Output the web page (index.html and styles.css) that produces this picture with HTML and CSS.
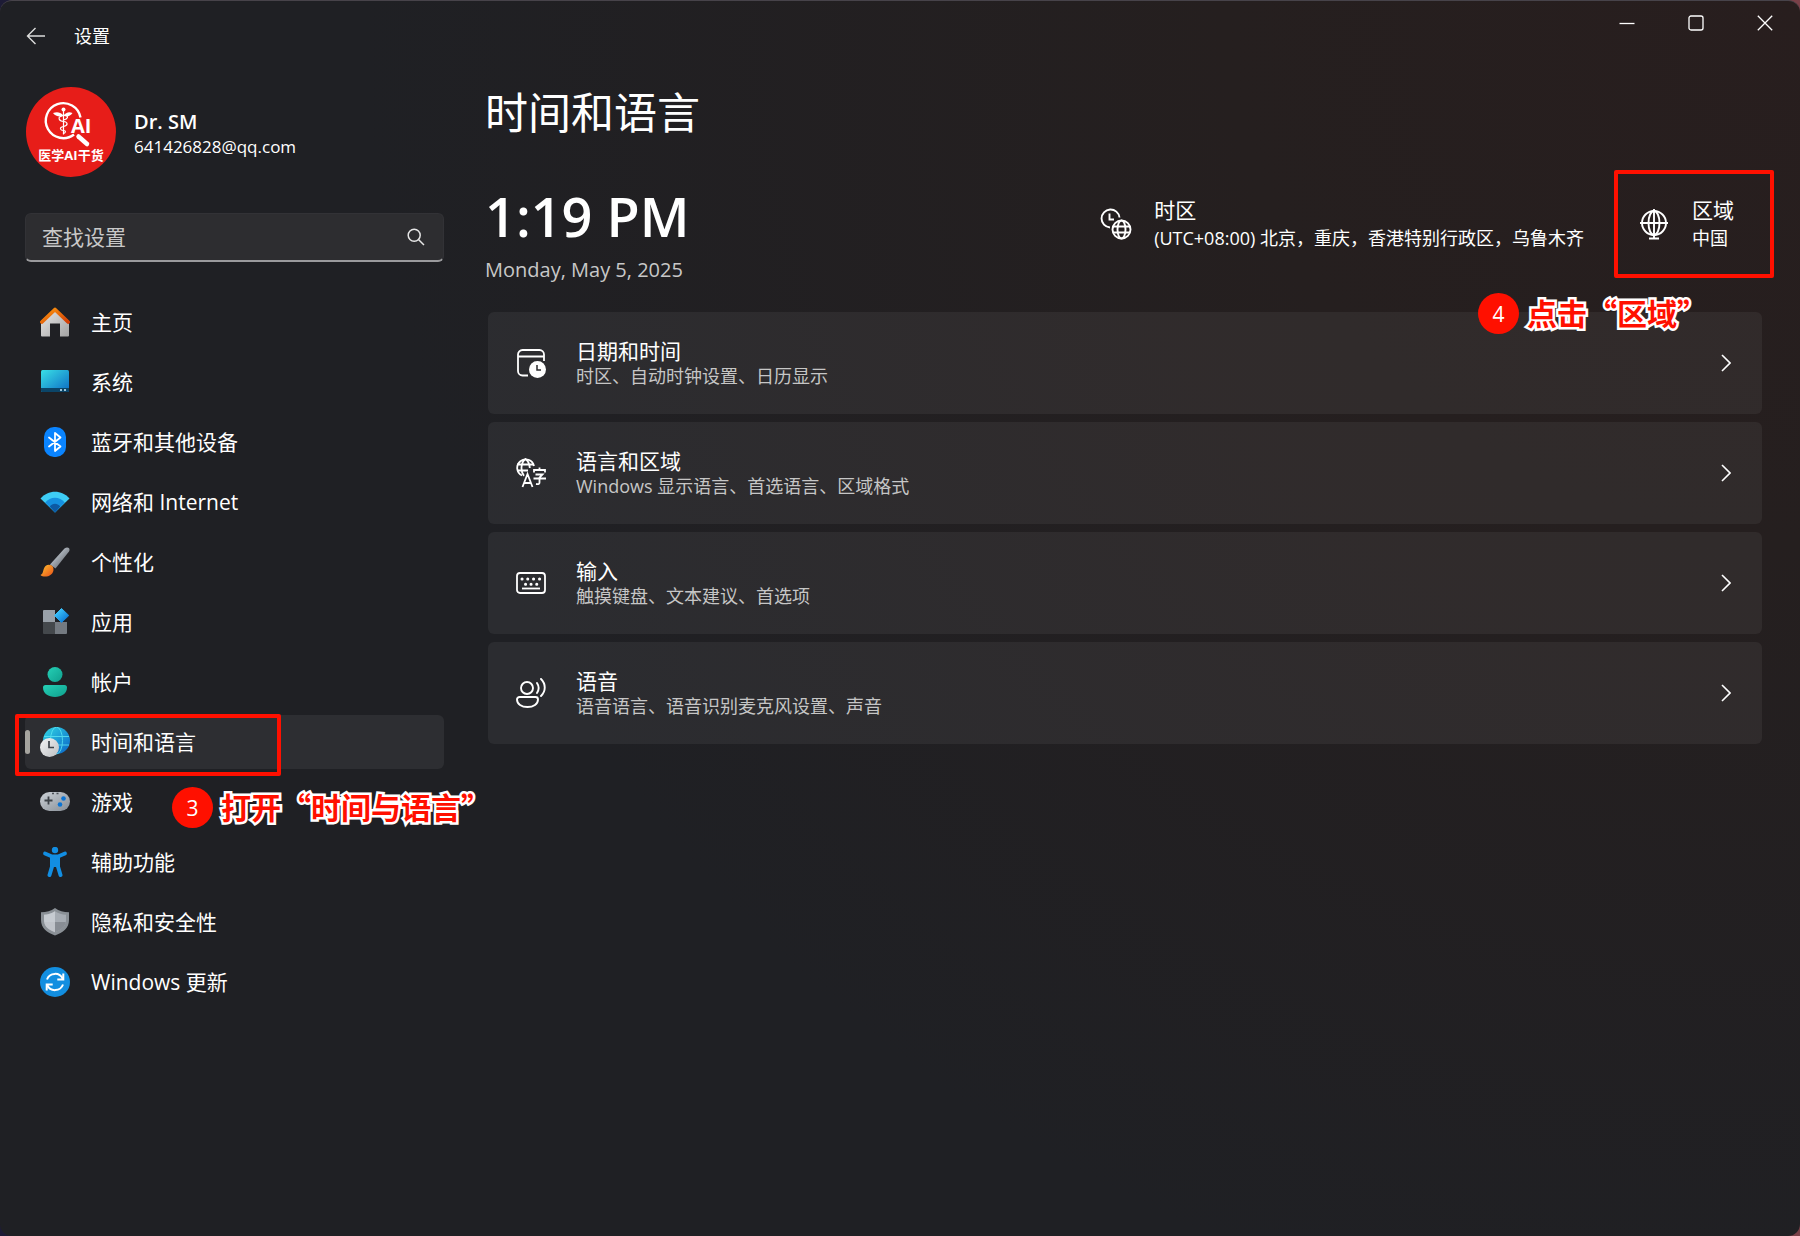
FILE: index.html
```html
<!DOCTYPE html>
<html lang="zh-CN">
<head>
<meta charset="utf-8">
<meta name="viewport" content="width=device-width, initial-scale=1">
<title>设置</title>
<link rel="stylesheet" href="styles.css">
</head>
<body>
<div class="window">
  <header class="titlebar">
    <button class="back" type="button" aria-label="返回">
      <svg width="20" height="18" viewBox="0 0 20 18" fill="none" stroke="#dcdcdc" stroke-width="1.4"><path d="M9.5 1 1.5 9l8 8M1.5 9H19"/></svg>
    </button>
    <span class="app-name">设置</span>
    <div class="controls">
      <button type="button" aria-label="最小化"><svg width="16" height="16" viewBox="0 0 16 16" fill="none" stroke="#fff" stroke-width="1.3"><path d="M.5 8.5h15"/></svg></button>
      <button type="button" aria-label="最大化"><svg width="16" height="16" viewBox="0 0 16 16" fill="none" stroke="#fff" stroke-width="1.3"><rect x="1" y="1" width="14" height="14" rx="2"/></svg></button>
      <button type="button" aria-label="关闭"><svg width="16" height="16" viewBox="0 0 16 16" fill="none" stroke="#fff" stroke-width="1.3"><path d="m.8.8 14.4 14.4M15.2.8.8 15.2"/></svg></button>
    </div>
  </header>

  <div class="layout">
    <aside class="sidebar">
      <div class="account">
        <svg class="avatar" viewBox="0 0 90 90" role="img" aria-label="医学AI干货">
          <circle cx="45" cy="45" r="45" fill="#e71d19"/>
          <path d="M54.500 30.500A17.500 17.500 0 1 0 48 47.500" fill="none" stroke="#fff" stroke-width="2.400"/>
          <path d="m52.500 49.500 8.500 7.500" stroke="#fff" stroke-width="4.500" stroke-linecap="round"/>
          <g fill="none" stroke="#fff" stroke-width="1.200" stroke-linecap="round">
            <path d="M37.500 23v24"/>
            <path d="M36 29c-5 1-3 5 1.500 5.500s5 4 0 5-3 4 0 4 2 2.500 0 3"/>
            <path d="M39 28c4 1 3 4-1.500 5"/>
          </g>
          <circle cx="37.500" cy="22.500" r="2" fill="#fff"/>
          <path d="M37 28c-3-3-6-3.500-10-2 2 3 6 4 10 3zM38 28c3-3 5-3.500 8.500-2-2 3-5 4-8.500 3z" fill="#fff"/>
          <text x="45" y="46" font-size="20" font-weight="700" fill="#fff">AI</text>
          <text x="45" y="73" font-size="13" font-weight="700" fill="#fff" text-anchor="middle">医学AI干货</text>
        </svg>
        <div class="account-text">
          <strong>Dr. SM</strong>
          <span>641426828@qq.com</span>
        </div>
      </div>

      <form class="search" role="search">
        <input type="search" placeholder="查找设置" aria-label="查找设置">
        <button type="submit" aria-label="搜索"><svg width="18" height="18" viewBox="0 0 18 18" fill="none" stroke="#e6e6e6" stroke-width="1.500"><circle cx="7.200" cy="7.200" r="6"/><path d="m11.500 11.500 5.500 5.500"/></svg></button>
      </form>

      <nav class="nav">
        <a href="#home"><svg viewBox="0 0 30 30"><defs><linearGradient id="wall" x1="0" y1="0" x2="1" y2="1"><stop offset="0" stop-color="#e9e9e9"/><stop offset="1" stop-color="#a3a3a3"/></linearGradient><linearGradient id="roof" x1="0" y1="0" x2="1" y2="1"><stop offset="0" stop-color="#ff9b10"/><stop offset="1" stop-color="#d13c05"/></linearGradient></defs><path d="M1 14 15 2l14 12v14.500a1 1 0 0 1-1 1h-8V16.500H10v13H2a1 1 0 0 1-1-1z" fill="url(#wall)"/><path d="M1.900 15 15 2.500 28.100 15" fill="none" stroke="url(#roof)" stroke-width="3.800" stroke-linecap="round" stroke-linejoin="round"/></svg><span>主页</span></a>
        <a href="#system"><svg viewBox="0 0 30 30"><defs><linearGradient id="scr" x1="0" y1="0" x2="1" y2="1"><stop offset="0" stop-color="#39e0e6"/><stop offset="1" stop-color="#0c6ac4"/></linearGradient></defs><rect x="1" y="3" width="28" height="22" rx="1.500" fill="url(#scr)"/><path d="M1 21h28v2.500a1.500 1.500 0 0 1-1.500 1.500h-25A1.500 1.500 0 0 1 1 23.500z" fill="#0b4568"/><path d="M20 22h2v2h-2zM24 22h2v2h-2z" fill="#9cc4da"/></svg><span>系统</span></a>
        <a href="#bluetooth"><svg viewBox="0 0 30 30"><rect x="4" y="0" width="22" height="30" rx="10" fill="#0a84ff"/><path d="m9 10.500 11.500 9L15 24V6l5.500 4.500-11.500 9" fill="none" stroke="#fff" stroke-width="1.800" stroke-linejoin="round" stroke-linecap="round"/></svg><span>蓝牙和其他设备</span></a>
        <a href="#network"><svg viewBox="0 0 30 30"><path d="M.5 11.500C8 2.500 22 2.500 29.500 11.500L15 25.500z" fill="#3ecdf5"/><path d="M5.200 15.500c5-6.500 14.600-6.500 19.600 0L15 25.500z" fill="#1590e0"/><path d="M9.800 19.500c2.800-3.800 7.600-3.800 10.400 0L15 25.500z" fill="#0c59a4"/></svg><span>网络和 Internet</span></a>
        <a href="#personalization"><svg viewBox="0 0 30 30"><defs><linearGradient id="hnd" x1="0" y1="0" x2="1" y2="1"><stop offset="0.300" stop-color="#b9c0c8"/><stop offset="0.800" stop-color="#686d74"/></linearGradient><linearGradient id="tip" x1="0" y1="0" x2="1" y2="1"><stop offset="0" stop-color="#ffc12e"/><stop offset="1" stop-color="#e8501a"/></linearGradient></defs><path d="M10 17.500 24.500 1.500c3-2.500 6.300-.5 4.500 3L15.500 21.500z" fill="url(#hnd)"/><path d="M.5 28c3.500-1.500 2-6 5-9 2.500-2 6-1.500 7.500 1 2 5-2 9-6.500 9.500-2 .2-5 0-6-1.500z" fill="url(#tip)"/></svg><span>个性化</span></a>
        <a href="#apps"><svg viewBox="0 0 30 30"><defs><linearGradient id="dia" x1="0" y1="0" x2="1" y2="1"><stop offset="0.200" stop-color="#3cc4fa"/><stop offset="0.900" stop-color="#0870d0"/></linearGradient></defs><path d="M4 3h11v12H3V4a1 1 0 0 1 1-1z" fill="#98a0a8"/><path d="M3 15h12v12H4a1 1 0 0 1-1-1z" fill="#44484c"/><path d="M15 15h12v11a1 1 0 0 1-1 1H15z" fill="#747a81"/><path d="M21.500 1.500 28.800 8.500 21.500 15.500 14.500 8.500z" fill="url(#dia)" stroke="url(#dia)" stroke-linejoin="round"/></svg><span>应用</span></a>
        <a href="#accounts"><svg viewBox="0 0 30 30"><defs><linearGradient id="usr" x1="0" y1="0" x2="1" y2="1"><stop offset="0" stop-color="#25d0b6"/><stop offset="1" stop-color="#0f9f8d"/></linearGradient></defs><circle cx="15" cy="7.500" r="7.500" fill="url(#usr)"/><path d="M5.500 18h19a2.500 2.500 0 0 1 2.500 2.500c0 6-5.500 9.500-12 9.500S3 26.500 3 20.500A2.500 2.500 0 0 1 5.500 18z" fill="url(#usr)"/></svg><span>帐户</span></a>
        <a href="#time" class="active" aria-current="page"><svg viewBox="0 0 30 30"><defs><linearGradient id="glb" x1="0" y1="0" x2="1" y2="1"><stop offset="0" stop-color="#30d8e4"/><stop offset="1" stop-color="#0a62c8"/></linearGradient><linearGradient id="clk" x1="0" y1="0" x2="1" y2="1"><stop offset="0" stop-color="#f4f4f4"/><stop offset="1" stop-color="#bcbfc2"/></linearGradient></defs><circle cx="16.500" cy="13.500" r="13.500" fill="url(#glb)"/><g fill="none" stroke="#5ee6f4" stroke-width="1" opacity=".8"><ellipse cx="16.500" cy="13.500" rx="6" ry="13.500"/><path d="M4 9.500h25M4 18h25"/></g><circle cx="9.500" cy="20.500" r="9.500" fill="url(#clk)"/><path d="M9 14v6.500h5" fill="none" stroke="#3c4248" stroke-width="1.700"/></svg><span>时间和语言</span><i class="mark mark-nav"></i></a>
        <a href="#gaming"><svg viewBox="0 0 30 30"><defs><linearGradient id="pad" x1="0" y1="0" x2="1" y2="1"><stop offset="0" stop-color="#ccd1d7"/><stop offset="1" stop-color="#868d95"/></linearGradient></defs><rect x="0" y="5" width="30" height="19" rx="9.500" fill="url(#pad)"/><path d="M8.500 9.500v8M4.500 13.500h8" stroke="#3d4248" stroke-width="1.800"/><path d="M12 6.500h2M16.500 6.500h2" stroke="#4c5157" stroke-width="1.300"/><circle cx="23.500" cy="11.500" r="2.300" fill="#0b74d4"/><circle cx="20" cy="17.500" r="2.300" fill="#0b74d4"/></svg><span>游戏</span></a>
        <a href="#accessibility"><svg viewBox="0 0 30 30"><g fill="none" stroke="#128ee2" stroke-linecap="round" stroke-linejoin="round"><path d="m5 6.500 7 3h6l7-3" stroke-width="3.800"/><path d="m12.500 18-3 10M17.500 18l3 10" stroke-width="4"/></g><path d="M10 8.500h10V20H10z" fill="#128ee2"/><circle cx="15" cy="3" r="3.200" fill="#128ee2"/></svg><span>辅助功能</span></a>
        <a href="#privacy"><svg viewBox="0 0 30 30"><path d="M15 1c4 3 8.500 4 14 4.200V13c0 8-6 12.500-14 15.500C7 25.500 1 21 1 13V5.200C6.500 5 11 4 15 1z" fill="#8a9096"/><path d="M15 4.200c3.500 2.300 7 3.300 11 3.600V13c0 6.500-4.500 9.500-11 12.300C8.500 22.500 4 19.500 4 13V7.800c4-.3 7.500-1.300 11-3.600z" fill="#a6acb3"/><path d="M15 4.200V15H4.200L4 13V7.800c4-.3 7.500-1.300 11-3.600z" fill="#c6cbd1"/><path d="M15 15v10.300C8.800 22.600 4.700 20 4.200 15z" fill="#c0c4ca"/><path d="M15 15h10.800c-.6 5-4.700 7.600-10.800 10.300z" fill="#888d94"/></svg><span>隐私和安全性</span></a>
        <a href="#update"><svg viewBox="0 0 30 30"><circle cx="15" cy="15" r="15" fill="#128ee0"/><g fill="none" stroke="#fff" stroke-width="2"><path d="M7 12.500A8.500 8.500 0 0 1 22.800 12M23 17.500A8.500 8.500 0 0 1 7.200 18"/><path d="M23.300 6.500V12.500h-6M6.700 23.500V17.500h6"/></g></svg><span>Windows 更新</span></a>
      </nav>
      <p class="note note-nav"><b>3</b><span>打开“时间与语言”</span></p>
    </aside>

    <main class="content">
      <h1>时间和语言</h1>
      <section class="summary">
        <div class="clock">
          <time class="clock-time">1:19 PM</time>
          <span class="clock-date">Monday, May 5, 2025</span>
        </div>
        <button class="fact" type="button">
          <svg viewBox="0 0 32 32" fill="none" stroke="#fff" stroke-width="1.900"><path d="M10 19.500A9 9 0 1 1 19.500 9.500"/><path d="M9.500 5.500v6H14"/><circle cx="21.500" cy="21.500" r="9"/><ellipse cx="21.500" cy="21.500" rx="4" ry="9"/><path d="M13 18.500h17M13 24.500h17"/></svg>
          <span class="fact-text"><span>时区</span><small>(UTC+08:00) 北京，重庆，香港特别行政区，乌鲁木齐</small></span>
        </button>
        <button class="fact fact-region" type="button">
          <svg viewBox="0 0 32 32" fill="none" stroke="#fff" stroke-width="1.900"><circle cx="16" cy="15" r="12"/><ellipse cx="16" cy="15" rx="5.500" ry="12"/><path d="M2 15h28M16 1v29M11 30.500h10"/></svg>
          <span class="fact-text"><span>区域</span><small>中国</small></span>
          <i class="mark mark-region"></i>
        </button>
        <p class="note note-region"><b>4</b><span>点击“区域”</span></p>
      </section>

      <div class="cards">
        <a class="card" href="#datetime">
          <svg class="card-icon" viewBox="0 0 30 30" fill="none" stroke="#fff" stroke-width="1.800"><path d="M12 27.500H6.500A4.500 4.500 0 0 1 2 23V6.500A4.500 4.500 0 0 1 6.500 2h17A4.500 4.500 0 0 1 28 6.500V13M2 8.500h26"/><circle cx="21.500" cy="21.500" r="8.500" fill="#fff" stroke="none"/><path d="M21 17v5h4" stroke="#2b2b2e" stroke-width="1.500"/></svg>
          <span class="card-text"><span>日期和时间</span><small>时区、自动时钟设置、日历显示</small></span>
          <svg class="chevron" viewBox="0 0 10 18"><path d="m1 1 8 8-8 8"/></svg>
        </a>
        <a class="card" href="#language">
          <svg class="card-icon" viewBox="0 0 30 30" fill="none" stroke="#fff" stroke-width="1.800"><path d="M6 17.500A8.500 8.500 0 1 1 18 8"/><path d="M8 17.800C4 13 5 4 9.500 1c3 2 4 5 4.300 9M1 6.500h16.500M1 12.500h11"/><path d="m6.500 29 5-13 5 13M8 25h7M18 14.500v-2.500h11v2.500M23.500 9.500V12M19.500 16.500h7l-3 3v5c0 1.500-1 2-3.500 1.500M17.500 20.500H30"/></svg>
          <span class="card-text"><span>语言和区域</span><small>Windows 显示语言、首选语言、区域格式</small></span>
          <svg class="chevron" viewBox="0 0 10 18"><path d="m1 1 8 8-8 8"/></svg>
        </a>
        <a class="card" href="#typing">
          <svg class="card-icon" viewBox="0 0 30 30" fill="none" stroke="#fff" stroke-width="1.800"><rect x="1" y="5" width="28" height="20" rx="3"/><path d="M6 20.500h18"/><path d="M6 11h.1M11.700 11h.1M17.500 11h.1M23.500 11h.1M9.500 16.300h.1M15 16.300h.1M20.700 16.300h.1" stroke-width="3" stroke-linecap="round"/></svg>
          <span class="card-text"><span>输入</span><small>触摸键盘、文本建议、首选项</small></span>
          <svg class="chevron" viewBox="0 0 10 18"><path d="m1 1 8 8-8 8"/></svg>
        </a>
        <a class="card" href="#speech">
          <svg class="card-icon" viewBox="0 0 30 30" fill="none" stroke="#fff" stroke-width="1.900" stroke-linecap="round"><circle cx="11" cy="10" r="6"/><path d="M3.500 19h16a2.500 2.500 0 0 1 2.500 2.500c0 4.500-4.500 7.500-10.500 7.500S1 26 1 21.500A2.500 2.500 0 0 1 3.500 19z"/><path d="M21 5c2 3 2 7 0 10M25 1c5 5 5 12 0 17"/></svg>
          <span class="card-text"><span>语音</span><small>语音语言、语音识别麦克风设置、声音</small></span>
          <svg class="chevron" viewBox="0 0 10 18"><path d="m1 1 8 8-8 8"/></svg>
        </a>
      </div>
    </main>
  </div>
</div>
</body>
</html>
```
FILE: styles.css
```css
* { box-sizing: border-box; }

body {
  margin: 0;
  background: linear-gradient(90deg, #1d1b36, #4a3a3c 40%, #7a4048);
  color: #fff;
  font-family: "Open Sans", "Noto Sans CJK SC", sans-serif;
  font-size: 21px;
  line-height: 28px;
}

button, input { font: inherit; color: inherit; }

button {
  border: 0;
  padding: 0;
  background: none;
}

a { color: inherit; text-decoration: none; }
svg { display: block; flex: none; }

.window {
  min-height: 100vh;
  border-top: 1px solid #47434a;
  border-radius: 12px;
  background: radial-gradient(ellipse 80% 110% at 100% 0, #281e1e, #251f1f 40%, #1f2024 100%);
}

.titlebar {
  display: flex;
  align-items: center;
  height: 70px;
  padding-left: 24px;
}

.back { padding: 2px; }
.app-name { margin-left: 26px; font-size: 18px; }

.controls {
  display: flex;
  align-self: flex-start;
  margin-left: auto;
}

.controls button {
  display: grid;
  place-items: center;
  width: 69px;
  height: 44px;
}

.controls button:last-child { margin-right: 1px; }

.layout {
  display: grid;
  grid-template-columns: 419px minmax(0, 1fr);
  column-gap: 41px;
  padding: 0 38px 40px 25px;
}

.sidebar { position: relative; padding-top: 16px; }

.account {
  display: flex;
  align-items: center;
  gap: 18px;
}

.avatar { width: 90px; height: 90px; margin-left: 1px; }
.account-text { display: grid; padding-top: 4px; font-size: 17px; line-height: 24px; }
.account-text strong { font-size: 20px; line-height: 26px; font-weight: 600; }

.search {
  display: flex;
  align-items: center;
  height: 49px;
  margin: 36px 0 33px;
  padding: 0 18px 0 16px;
  border: 1px solid #323236;
  border-bottom: 2px solid #9a9a9d;
  border-radius: 6px;
  background: #2d2d30;
}

.search input {
  flex: 1;
  min-width: 0;
  padding: 0;
  border: 0;
  outline: 0;
  background: none;
}

.search input::placeholder { color: #c8c8c8; opacity: 1; }

.nav { display: grid; gap: 6px; }

.nav a {
  position: relative;
  display: flex;
  align-items: center;
  gap: 21px;
  height: 54px;
  padding-left: 15px;
  border-radius: 6px;
}

.nav svg { width: 30px; height: 30px; }
.nav .active { background: #2d2e32; }

.nav .active::before {
  content: "";
  position: absolute;
  left: 0;
  top: 15px;
  width: 5px;
  height: 24px;
  border-radius: 3px;
  background: #a5a49f;
}

.content { padding-top: 12px; }

h1 {
  margin: 0;
  font-size: 43px;
  line-height: 60px;
  font-weight: 400;
}

.summary {
  position: relative;
  display: flex;
  align-items: flex-start;
  gap: 6px;
  margin-top: 27px;
}

.clock { display: grid; margin-right: auto; padding-top: 4px; }
.clock-time { font-size: 54px; line-height: 84px; font-weight: 600; }
.clock-date { color: #c8c8c8; font-size: 20px; line-height: 24px; }

.fact {
  position: relative;
  display: flex;
  align-items: center;
  gap: 22px;
  height: 108px;
  padding: 0 24px;
  text-align: left;
}

.fact-region { padding-right: 28px; }
.fact svg { width: 32px; height: 32px; }
.fact-text, .card-text { display: grid; }
.fact small { font-size: 18px; }

.cards {
  display: grid;
  gap: 8px;
  margin: 30px 0 0 3px;
}

.card {
  display: flex;
  align-items: center;
  gap: 30px;
  height: 102px;
  padding: 0 31px 0 28px;
  border-radius: 6px;
  background: rgba(255, 255, 255, 0.055);
}

.card-icon { width: 30px; height: 30px; }
.card-text { line-height: 26px; }
.card small { color: #c6c6c6; font-size: 18px; line-height: 24px; }

.chevron {
  width: 10px;
  height: 18px;
  margin-left: auto;
  fill: none;
  stroke: #fff;
  stroke-width: 1.6;
}

/* Tutorial call-outs drawn over the window */
.mark {
  position: absolute;
  border: 4px solid #ff1000;
  border-radius: 2px;
  pointer-events: none;
}

.mark-nav { left: -10px; top: -1px; width: 266px; height: 62px; }
.mark-region { inset: 0 -12px 0 0; }

.note {
  position: absolute;
  z-index: 1;
  display: flex;
  align-items: center;
  gap: 8px;
  margin: 0;
  white-space: nowrap;
}

.note b {
  display: grid;
  place-items: center;
  width: 41px;
  height: 41px;
  border-radius: 50%;
  background: #ff1000;
  font-weight: 400;
}

.note span {
  padding-bottom: 4px;
  color: #ff1000;
  font-family: "Noto Sans CJK SC", sans-serif;
  font-size: 30px;
  font-weight: 700;
  -webkit-text-stroke: 5px #fff;
  paint-order: stroke fill;
}

.note-nav { left: 147px; top: 716px; }
.note-region { right: 55px; top: 123px; }
```
